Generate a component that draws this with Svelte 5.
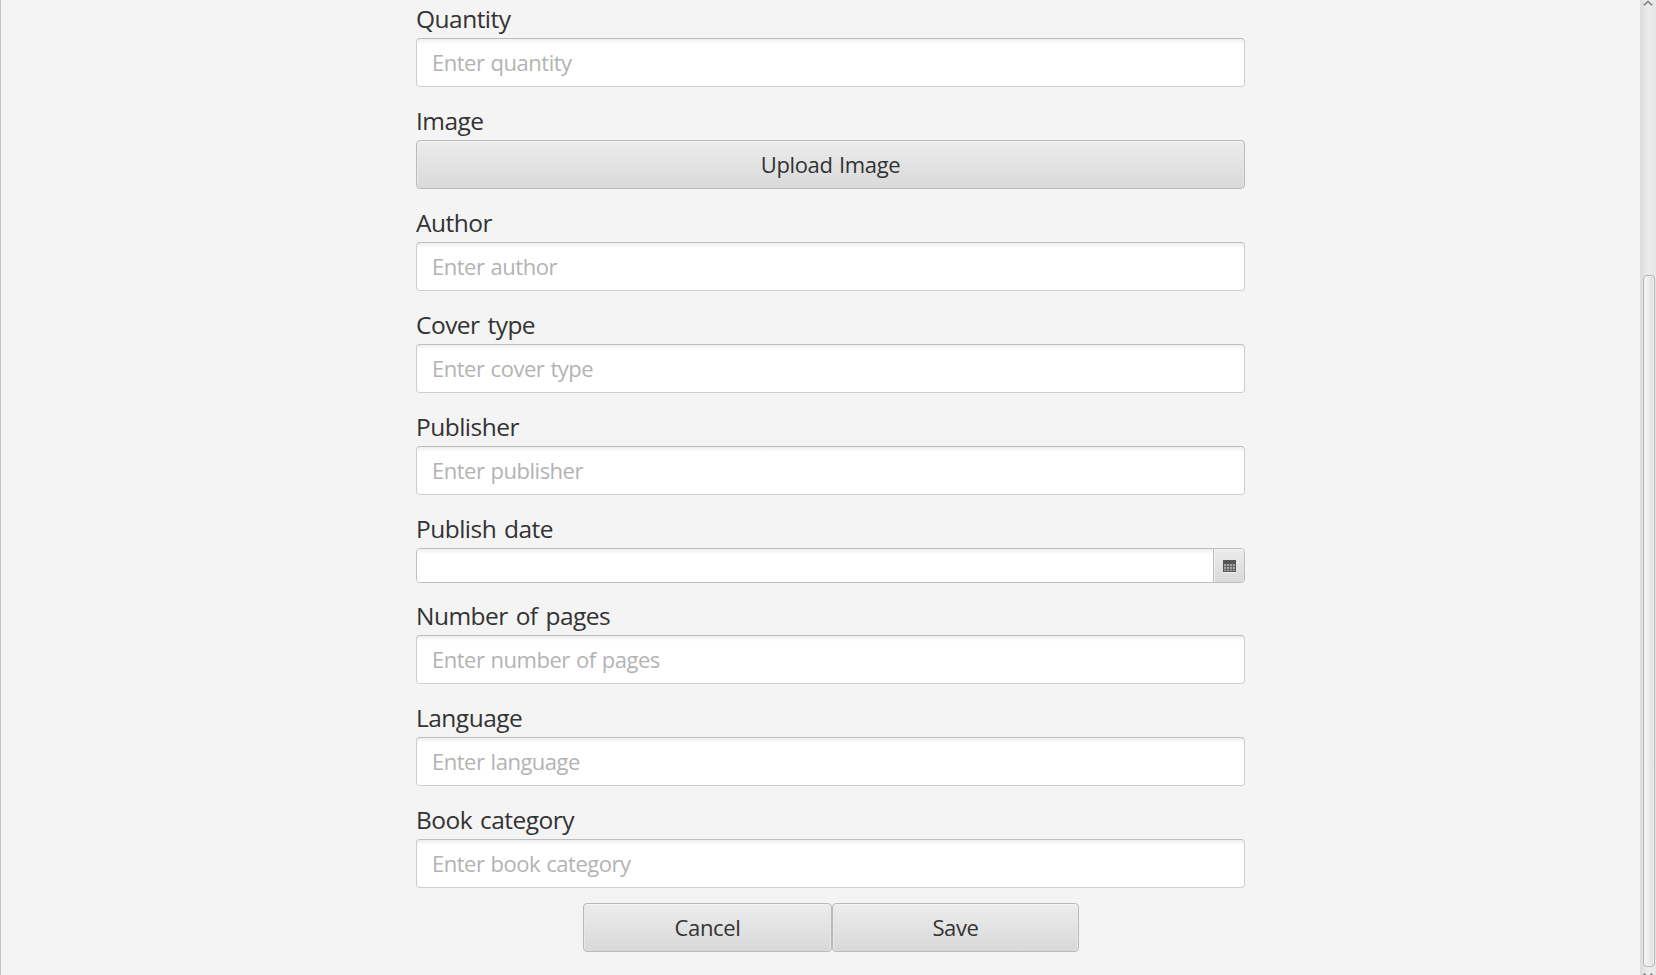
<script>
  const fields = [
    { label: 'Quantity', hint: 'Enter quantity' },
    { label: 'Image', kind: 'upload' },
    { label: 'Author', hint: 'Enter author' },
    { label: 'Cover type', hint: 'Enter cover type' },
    { label: 'Publisher', hint: 'Enter publisher' },
    { label: 'Publish date', kind: 'date' },
    { label: 'Number of pages', hint: 'Enter number of pages' },
    { label: 'Language', hint: 'Enter language' },
    { label: 'Book category', hint: 'Enter book category' }
  ];
</script>

<div class="window">
  <main>
    <form onsubmit={(e) => e.preventDefault()}>
      {#each fields as f}
        <div class="field">
          <div class="label">{f.label}</div>
          {#if f.kind === 'upload'}
            <button type="button" class="btn">Upload Image</button>
          {:else if f.kind === 'date'}
            <div class="date">
              <div class="dateinput"></div>
              <button type="button" class="cal" aria-label="Open calendar">
                <svg width="13" height="13" viewBox="0 0 13 13" shape-rendering="crispEdges">
                  <rect y="12" width="13" height="1" fill="#f4f4f4" />
                  <rect width="13" height="12" fill="#555" />
                  <path d="M1 4h11v7H1z" fill="#a5a5a5" />
                  <path d="M1 6h11v1H1zM1 9h11v1H1zM3 4h1v7H3zM6 4h1v7H6zM9 4h1v7H9z" fill="#686868" />
                </svg>
              </button>
            </div>
          {:else}
            <input class="input" type="text" placeholder={f.hint} />
          {/if}
        </div>
      {/each}
      <div class="actions">
        <button type="button" class="btn cancel">Cancel</button>
        <button type="button" class="btn save">Save</button>
      </div>
    </form>
  </main>
  <div class="scroll">
    <svg class="arrow" width="10" height="6" viewBox="0 0 10 6"><path d="M.8 5.200L5 1.400l4.200 3.800" fill="none" stroke="#777" stroke-width="1.500" /></svg>
    <div class="thumb"></div>
    <svg class="arrow" width="10" height="6" viewBox="0 0 10 6"><path d="M.8.6L5 4.600 9.200.6" fill="none" stroke="#777" stroke-width="1.500" /></svg>
  </div>
</div>

<style>
  :global(body) { overflow: hidden; background: #f4f4f4; }
  .window {
    display: flex;
    box-sizing: border-box;
    width: 1656px;
    height: 975px;
    overflow: hidden;
    border-left: 1px solid #c4c4c4;
    background: #f4f4f4;
    color: #333;
    font-family: 'Open Sans', 'Noto Sans', sans-serif;
  }
  main { flex: 1; padding-left: 415px; }
  form { width: 829px; }
  .field { display: flex; flex-direction: column; }
  .label {
    box-sizing: border-box;
    height: 53px;
    padding-top: 17px;
    line-height: 34px;
    font-size: 24.5px;
    letter-spacing: -0.52px;
    word-spacing: 2px;
    white-space: nowrap;
  }
  .field:first-child .label { margin-top: -15px; }
  .input, .btn {
    box-sizing: border-box;
    width: 100%;
    height: 49px;
    margin: 0;
    border: 1px solid #c4c4c4;
    border-radius: 4px;
    outline: none;
    font-family: inherit;
    font-size: 22px;
    letter-spacing: -0.5px;
    word-spacing: 1px;
  }
  .input {
    padding: 0 15px 1px;
    border-color: #bdbdbd #cdcdcd #cfcfcf;
    background: linear-gradient(#eeeeee, #fff 5px);
    color: #333;
  }
  .input::placeholder { color: #b3b3b3; opacity: 1; }
  .btn {
    padding: 0 0 2px;
    border-color: #bababa;
    background: linear-gradient(#ececec, #d9d9d9);
    box-shadow: inset 0 1px #f4f4f4, inset 1px 0 #e8e8e8, inset -1px 0 #e8e8e8;
    color: #333;
    letter-spacing: -0.35px;
  }
  .date {
    display: flex;
    box-sizing: border-box;
    height: 35px;
    margin-bottom: -1px;
    overflow: hidden;
    border: 1px solid #bdbdbd;
    border-radius: 4px;
  }
  .dateinput { flex: 1; background: linear-gradient(#eeeeee, #fff 5px); }
  .cal {
    display: flex;
    box-sizing: border-box;
    align-items: center;
    justify-content: center;
    width: 31px;
    padding: 1px 0 0;
    border: 0;
    border-left: 1px solid #bdbdbd;
    background: linear-gradient(#ececec, #d9d9d9);
    box-shadow: inset 1px 1px #f2f2f2;
  }
  .actions { display: flex; padding: 15px 0 0 167px; }
  .cancel { width: 249px; }
  .save { width: 247px; }
  .scroll {
    display: flex;
    flex-direction: column;
    box-sizing: border-box;
    width: 16px;
    padding: 0 0 0 2px;
    border-left: 1px solid #dedede;
    background: linear-gradient(90deg, #dedede, #ececec 50%, #e6e6e6);
  }
  .arrow { flex: none; }
  .thumb {
    flex: none;
    box-sizing: border-box;
    width: 12px;
    height: 692px;
    margin: 269px 0 6px;
    border: 1px solid #b5b5b5;
    border-radius: 4px;
    background: linear-gradient(90deg, #f7f7f7, #e9e9e9 60%, #dcdcdc);
    box-shadow: inset 0 0 0 1px #f3f3f3;
  }
</style>
